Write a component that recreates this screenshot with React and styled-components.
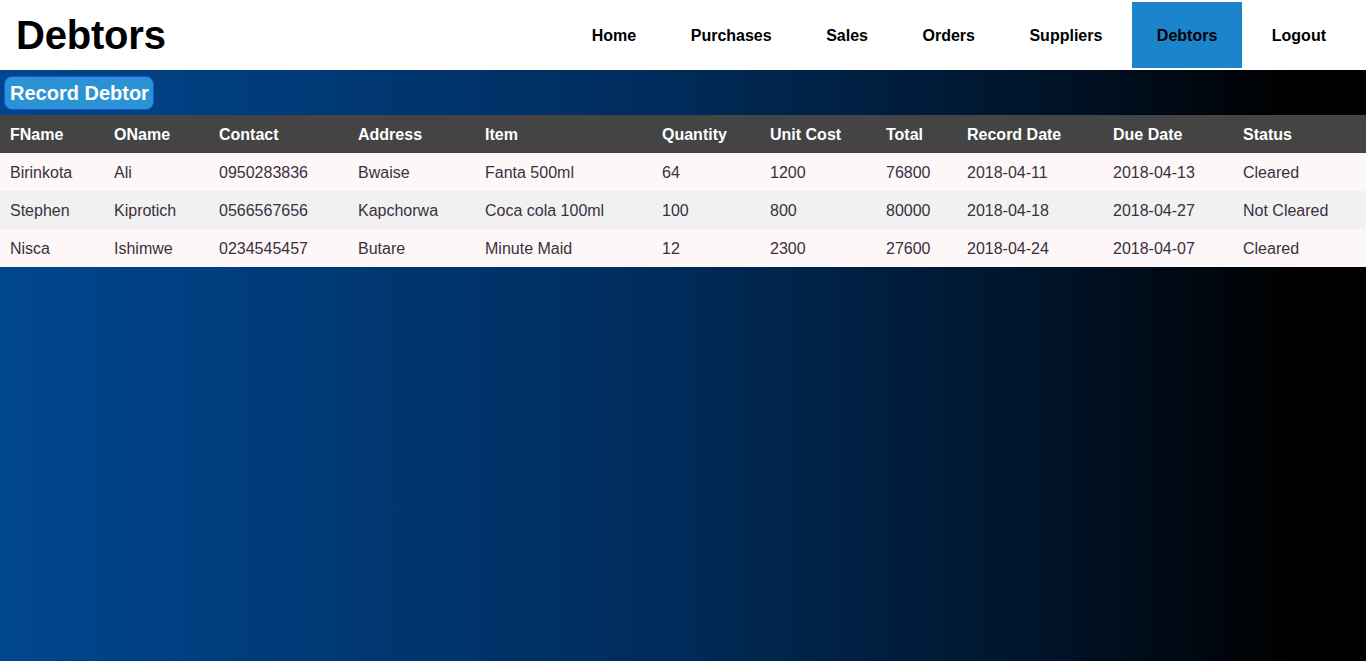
import React from "react";
import styled, { createGlobalStyle } from "styled-components";

const GlobalStyle = createGlobalStyle`
  html, body {
    margin: 0;
    padding: 0;
    height: 100%;
  }
  body {
    font-family: "Liberation Sans", Arial, sans-serif;
    background: linear-gradient(to right, #00468f 0%, #002c5c 48%, #00152c 75%, #000 95%);
    min-height: 661px;
  }
`;

const Header = styled.header`
  background: #fff;
  height: 70px;
  display: flex;
  align-items: center;
  justify-content: space-between;
  padding: 0 15px 0 16px;
`;

const Title = styled.h1`
  margin: 0;
  font-size: 40px;
  font-weight: bold;
  color: #000;
  letter-spacing: -0.2px;
`;

const Nav = styled.nav`
  display: flex;
  align-self: stretch;
  gap: 4.5px;
  padding: 2px 0 2px;
`;

const NavItem = styled.a`
  display: flex;
  align-items: center;
  padding: 2px 25px 0;
  font-size: 16px;
  font-weight: bold;
  color: #000;
  text-decoration: none;
  background: ${(p) => (p.$active ? "#1c84ca" : "transparent")};
`;

const Toolbar = styled.div`
  padding: 6px 4px 5px;
`;

const RecordButton = styled.button`
  font-family: "Liberation Sans", Arial, sans-serif;
  font-size: 20px;
  font-weight: bold;
  color: #fff;
  background: #2b93d3;
  border: 1px solid #1b4fe0;
  border-radius: 8px;
  padding: 5px 4px 4px 5px;
  line-height: 23px;
  cursor: pointer;
`;

const Table = styled.table`
  width: 100%;
  border-collapse: collapse;
  table-layout: fixed;
`;

const Th = styled.th`
  background: #444;
  color: #fff;
  text-align: left;
  font-size: 16px;
  font-weight: bold;
  height: 37px;
  padding: 1px 10px 0;
`;

const Row = styled.tr`
  background: ${(p) => (p.$alt ? "#f1f1f1" : "#fdf7f7")};
`;

const Td = styled.td`
  color: #3b3040;
  font-size: 16px;
  height: 37px;
  padding: 1px 10px 0;
`;

const columns = [
  ["FName", 104],
  ["OName", 105],
  ["Contact", 139],
  ["Address", 127],
  ["Item", 177],
  ["Quantity", 108],
  ["Unit Cost", 116],
  ["Total", 81],
  ["Record Date", 146],
  ["Due Date", 130],
  ["Status", 133],
];

const debtors = [
  ["Birinkota", "Ali", "0950283836", "Bwaise", "Fanta 500ml", "64", "1200", "76800", "2018-04-11", "2018-04-13", "Cleared"],
  ["Stephen", "Kiprotich", "0566567656", "Kapchorwa", "Coca cola 100ml", "100", "800", "80000", "2018-04-18", "2018-04-27", "Not Cleared"],
  ["Nisca", "Ishimwe", "0234545457", "Butare", "Minute Maid", "12", "2300", "27600", "2018-04-24", "2018-04-07", "Cleared"],
];

const links = ["Home", "Purchases", "Sales", "Orders", "Suppliers", "Debtors", "Logout"];

export default function App() {
  return (
    <>
      <GlobalStyle />
      <Header>
        <Title>Debtors</Title>
        <Nav>
          {links.map((l) => (
            <NavItem key={l} href="#" $active={l === "Debtors"}>
              {l}
            </NavItem>
          ))}
        </Nav>
      </Header>
      <Toolbar>
        <RecordButton>Record Debtor</RecordButton>
      </Toolbar>
      <Table>
        <colgroup>
          {columns.map(([name, w]) => (
            <col key={name} style={{ width: w }} />
          ))}
        </colgroup>
        <thead>
          <tr>
            {columns.map(([name]) => (
              <Th key={name}>{name}</Th>
            ))}
          </tr>
        </thead>
        <tbody>
          {debtors.map((d, i) => (
            <Row key={i} $alt={i % 2 === 1}>
              {d.map((cell, j) => (
                <Td key={j}>{cell}</Td>
              ))}
            </Row>
          ))}
        </tbody>
      </Table>
    </>
  );
}
